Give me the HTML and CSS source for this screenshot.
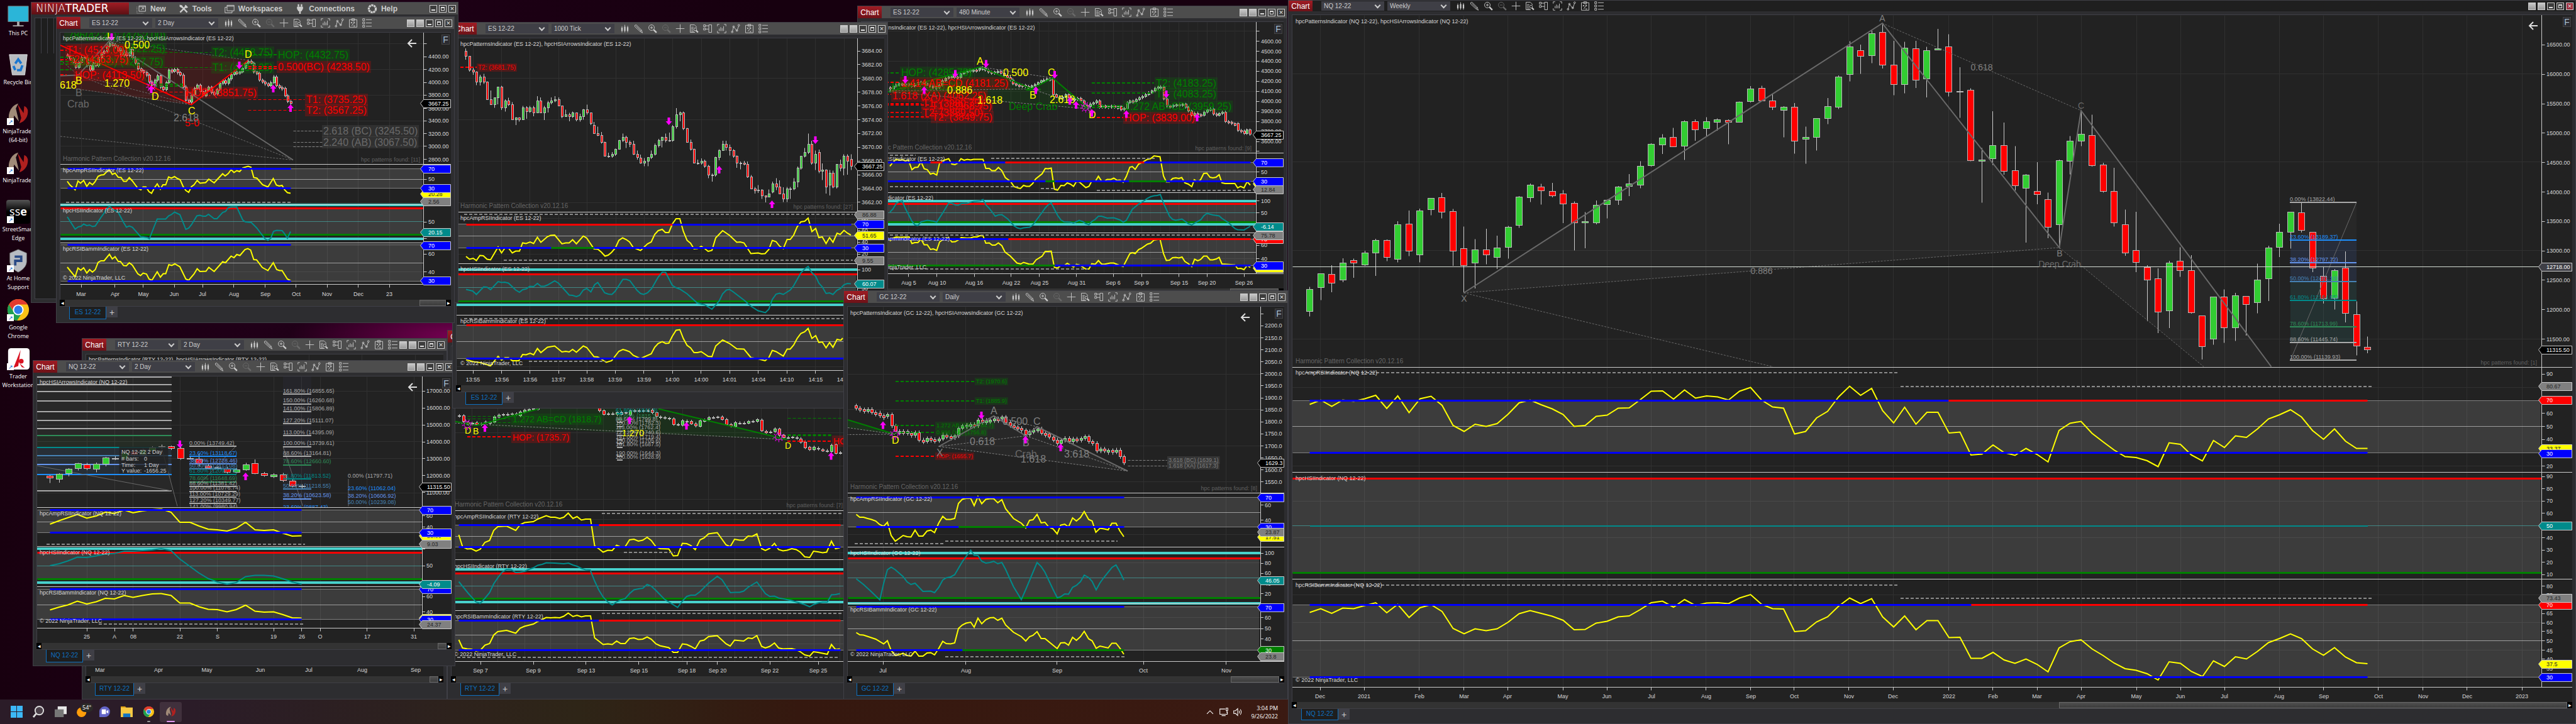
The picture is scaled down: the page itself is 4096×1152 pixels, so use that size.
FILE: index.html
```html
<!DOCTYPE html>
<html lang="en">
<head>
    <meta charset="UTF-8">
    <meta name="viewport" content="width=device-width, initial-scale=1.0">
    <title>NinjaTrader Desktop</title>
    <link rel="stylesheet" href="styles.css">
</head>
<body>
    <svg class="sprite" aria-hidden="true">
        <symbol id="i-bars" viewBox="0 0 20 20"><path d="M4 5v13M10 2v16M16 4v14" class="s"/><path d="M2.500 8h3v7h-3zM8.500 6h3v9h-3zM14.500 7h3v8h-3z" class="f"/></symbol>
        <symbol id="i-pencil" viewBox="0 0 20 20"><path d="M2 3l3-1 11 11-3 3L2 6zM4.500 4.500l10 10M13 16l5 3-2-6" class="s"/></symbol>
        <symbol id="i-zoomin" viewBox="0 0 20 20"><circle cx="8" cy="8" r="6" class="s"/><path d="M5 8h6M8 5v6" class="s"/><path d="M12.500 12.500l6 6" class="t"/></symbol>
        <symbol id="i-zoomout" viewBox="0 0 20 20"><circle cx="8" cy="8" r="6" class="s"/><path d="M5 8h6" class="s"/><path d="M12.500 12.500l6 6" class="t"/></symbol>
        <symbol id="i-cross" viewBox="0 0 20 20"><path d="M1 10h18M10 1v18" class="s"/></symbol>
        <symbol id="i-data" viewBox="0 0 20 20"><path d="M12 18H2V2h9l4 4v2M4 7h5M4 10h4M4 13h4M4 16h6" class="s"/><circle cx="12.500" cy="11.500" r="3" class="s"/><path d="M14.500 14l4 4" class="t"/></symbol>
        <symbol id="i-trader" viewBox="0 0 20 20"><path d="M1 2h4v4H1zM1 9h4v4H1zM5 4h7M5 11h7M12 2h6v16h-6z" class="s"/></symbol>
        <symbol id="i-chart" viewBox="0 0 20 20"><path d="M5 1H1v4M15 1h4v4M5 19H1v-4M15 19h4v-4M5 15v-5M8 15V7M11 15V9M14 15V5" class="s"/></symbol>
        <symbol id="i-poly" viewBox="0 0 20 20"><path d="M3 17L6 6l7 9 4-11" class="s"/><circle cx="3" cy="17" r="1.800" class="s"/><circle cx="6" cy="6" r="1.800" class="s"/><circle cx="13" cy="14" r="1.800" class="s"/><circle cx="17" cy="3" r="1.800" class="s"/></symbol>
        <symbol id="i-strategy" viewBox="0 0 20 20"><path d="M2 3h16v16H2zM7 1h6v4H7zM5 8l3 3M8 8l-3 3M11 15l3 3M14 15l-3 3M7 16l6-8M10 8h3v3" class="s"/></symbol>
        <symbol id="i-list" viewBox="0 0 20 20"><path d="M1 1h4v4H1zM1 8h4v4H1zM1 15h4v4H1zM8 3h12M8 10h12M8 17h12" class="s"/></symbol>
        <symbol id="i-nt" viewBox="0 0 40 40"><path d="M4 27C4 13 12 5 20 3l-4 8 5 22-8-10-2 11c-4-1-7-3-7-7z" fill="#a08a78"/><path d="M36 14c1 11-5 19-14 22l3-9-6-23 10 15 1-12c3 1 5 3 6 7z" fill="#b0201f"/></symbol>
        <symbol id="i-chrome" viewBox="0 0 40 40"><circle cx="20" cy="20" r="18" fill="#fbc116"/><path d="M4.400 11A18 18 0 0 0 18 38l9-14-14 0z" fill="#1fa050"/><path d="M4.400 11A18 18 0 0 1 35.600 11H20l-9 9z" fill="#e33b2e"/><circle cx="20" cy="20" r="9" fill="#fff"/><circle cx="20" cy="20" r="7" fill="#2f7de9"/></symbol>
    </svg>

    <main class="desktop">
        <div class="monitor left">
            <ul class="shortcuts">
                <li><a href="#"><svg viewBox="0 0 40 40"><path d="M3 4h34v26H3z" fill="#2bb5d8" stroke="#777"/><path d="M18 30h4v6h-4zM11 36h18v2H11z" fill="#aaa"/></svg>This PC</a></li>
                <li><a href="#"><svg viewBox="0 0 40 40"><path d="M5 3h30l-4 34H10z" fill="#b9bcc0" stroke="#ddd"/><path d="M15 18l5-7 5 7M27 21l-3 8h-6M12 22l3 7" stroke="#1976d2" stroke-width="4" fill="none"/></svg>Recycle Bin</a></li>
                <li><a href="#" class="link"><svg viewBox="0 0 40 40"><use href="#i-nt"/></svg>NinjaTrader<br>(64-bit)</a></li>
                <li><a href="#" class="link"><svg viewBox="0 0 40 40"><use href="#i-nt"/></svg>NinjaTrader</a></li>
                <li><a href="#" class="link"><span class="tile sse">ss<b>e</b></span>StreetSmart<br>Edge</a></li>
                <li><a href="#" class="link"><svg viewBox="0 0 40 40"><path d="M20 1l14 6v14c0 9-8 15-14 18C14 36 6 30 6 21V7z" fill="#b8bcc2" stroke="#777"/><path d="M14 13h11v7H15v8" stroke="#2a4a86" stroke-width="4" fill="none"/></svg>At Home<br>Support</a></li>
                <li><a href="#" class="link"><svg viewBox="0 0 40 40"><use href="#i-chrome"/></svg>Google<br>Chrome</a></li>
                <li><a href="#" class="link"><svg viewBox="0 0 40 40"><rect x="3" y="2" width="36" height="36" rx="5" fill="#fff"/><path d="M24 5L12 35l8-3z" fill="#d81222"/><circle cx="25" cy="24" r="4" fill="#d81222"/><path d="M22 27l9 8-5-1z" fill="#d81222"/></svg>Trader<br>Workstation</a></li>
            </ul>

            <section class="window w-rty-left" id="rtyLeft"></section>
            <section class="window w-rty-mid" id="rtyMid"></section>
            <section class="window w-nq-left" id="nqLeft"></section>
            <section class="window w-es-480" id="es480"></section>
            <section class="window w-es-tick" id="esTick"></section>

            <section class="window control-center">
                <header class="main-bar">
                    <h1 class="logo">NINJA<b>TRADER</b></h1>
                    <nav>
                        <a href="#"><svg viewBox="0 0 20 20"><path d="M5 4h13v11H5zM5 6h13M9 12l5-4M11 8h3v3" class="s"/><path d="M1 6v13h13" class="s" stroke-dasharray="1 2"/></svg>New</a>
                        <a href="#"><svg viewBox="0 0 20 20"><path d="M3 17L16 4M5 4l12 13" class="w"/><path d="M2 2l5 1 1 3-2 2-4-2zM13 2l-1 4 3 3 4-2" class="f"/></svg>Tools</a>
                        <a href="#"><svg viewBox="0 0 20 20"><path d="M5 3h14v11H5zM5 5h14M5 7H1v11h14v-4" class="s"/></svg>Workspaces</a>
                        <a href="#"><svg viewBox="0 0 20 20"><path d="M7 1v5M13 1v5M10 14v6" class="w"/><path d="M4 6h12v4l-3 5H7l-3-5z" class="f"/></svg>Connections</a>
                        <a href="#"><svg viewBox="0 0 20 20"><circle cx="10" cy="10" r="7" class="ring"/></svg>Help</a>
                    </nav>
                    <div class="controls"><button class="min" aria-label="Minimize"></button><button class="max" aria-label="Maximize"></button><button class="close" aria-label="Close"></button></div>
                </header>
                <div class="main-body"></div>
            </section>

            <section class="window w-es-2day" id="es2day"></section>
            <section class="window w-gc" id="gc"></section>

            <footer class="taskbar">
                <div class="apps">
                    <button aria-label="Start"><svg viewBox="0 0 20 20"><path d="M0 0h9.500v9.500H0zM10.500 0H20v9.500h-9.500zM0 10.500h9.500V20H0zM10.500 10.500H20V20h-9.500z" fill="#3cb8f6"/></svg></button>
                    <button aria-label="Search"><svg viewBox="0 0 20 20"><circle cx="11" cy="8" r="7" fill="#4a3f48" stroke="#ddd" stroke-width="2"/><path d="M6 13l-5 6" stroke="#ddd" stroke-width="3"/></svg></button>
                    <button aria-label="Task view"><svg viewBox="0 0 20 20"><path d="M5 1h15v13H5z" fill="#e8e8e8"/><path d="M0 6h15v13H0z" fill="#777"/></svg></button>
                    <button aria-label="Weather"><svg viewBox="0 0 20 20"><circle cx="8" cy="11" r="8" fill="#ff9d0a"/></svg><span class="temp">54°</span></button>
                    <button aria-label="Chat"><svg viewBox="0 0 20 20"><path d="M1 19V9a9 9 0 1 1 9 10z" fill="#6264c7"/><path d="M5 6h7v8H5zM13 9l3-2v6l-3-2z" fill="#fff"/></svg></button>
                    <button aria-label="Files"><svg viewBox="0 0 20 20"><path d="M0 1h7l2 2h11v16H0z" fill="#f7c843"/><path d="M0 1h7l2 2H0z" fill="#d99a10"/><path d="M4 13h12v6H4z" fill="#1173c5"/></svg></button>
                    <button aria-label="Chrome"><svg viewBox="0 0 40 40"><use href="#i-chrome"/></svg><i class="dot"></i></button>
                    <button class="active" aria-label="NinjaTrader"><svg viewBox="0 0 40 40"><use href="#i-nt"/></svg><i class="dot"></i></button>
                </div>
                <div class="tray">
                    <svg viewBox="0 0 20 20"><path d="M3 14l7-7 7 7"/></svg>
                    <svg viewBox="0 0 20 20"><path d="M13 3H1v12h17V9M5 18h9M15 1h4v5h-4zM17 6v6"/></svg>
                    <svg viewBox="0 0 20 20"><path d="M1 7h4l5-5v16l-5-5H1zM13 7q2 3 0 6M16 4q4 6 0 12"/></svg>
                    <time>3:04 PM<br>9/26/2022</time>
                </div>
            </footer>
        </div>
        <div class="monitor right">
            <section class="window maximized" id="nqWeekly"></section>
        </div>
    </main>

    <template id="chartWindow">
        <header class="title-bar">
            <button class="badge">Chart</button>
            <label class="drop"><select class="instrument" aria-label="Instrument"></select></label>
            <label class="drop"><select class="interval" aria-label="Interval"></select></label>
            <div class="tools"></div>
            <div class="controls"><button class="blank" aria-label="Link instrument"></button><button class="blank" aria-label="Link interval"></button><button class="min" aria-label="Minimize"></button><button class="max" aria-label="Maximize"></button><button class="close" aria-label="Close"></button></div>
        </header>
        <div class="plot"><svg></svg><button class="fixed">F</button></div>
        <div class="scroll"><button aria-label="Scroll left">&#9666;</button><div class="track"><div class="thumb"></div></div><button aria-label="Scroll right">&#9656;</button></div>
        <div class="tabs"><button class="tab"></button><button class="add" aria-label="Add tab">+</button></div>
    </template>

    <script src="charts.js"></script>
</body>
</html>
```
FILE: styles.css
```css
* {
    box-sizing: border-box;
}
body {
    margin: 0;
    background: #17000f;
    color: #ccc;
    font-family: Arial, "Liberation Sans", sans-serif;
    font-size: 10px;
    overflow: hidden;
}
button {
    font-family: inherit;
    color: inherit;
    border: none;
    padding: 0;
    background: none;
}
a {
    color: inherit;
    text-decoration: none;
}
.sprite {
    position: absolute;
    width: 0;
    height: 0;
}
.s {
    fill: none;
    stroke: currentColor;
    stroke-width: 1.2;
}
.t, .w {
    fill: none;
    stroke: currentColor;
    stroke-width: 3;
}
.f {
    fill: currentColor;
}
.ring {
    fill: none;
    stroke: currentColor;
    stroke-width: 4;
    stroke-dasharray: 4 1;
}
.desktop {
    display: grid;
    grid-template-columns: 1fr 1fr;
    height: 100vh;
}
.monitor {
    position: relative;
    overflow: hidden;
}
.left {
    background: radial-gradient(ellipse 280px 60px at 740px 535px, #7a0055, transparent), linear-gradient(90deg, #18000f, #200018 20%, #17000f 60%);
}

/* desktop shortcuts */
.shortcuts {
    list-style: none;
    margin: 0;
    padding: 6px 0;
    width: 58px;
    font-family: "Open Sans", sans-serif;
    font-size: 9px;
    line-height: 14px;
    color: #fff;
    text-align: center;
}
.shortcuts li {
    height: 78px;
}
.shortcuts a {
    display: block;
    position: relative;
    white-space: nowrap;
}
.shortcuts svg, .tile {
    display: block;
    width: 38px;
    height: 38px;
    margin: 0 auto 2px;
}
.tile {
    background: linear-gradient(#555, #000 50%);
    border-radius: 4px;
    font-size: 18px;
    line-height: 36px;
}
.link::before {
    content: "\2197";
    position: absolute;
    left: 11px;
    top: 26px;
    width: 11px;
    height: 11px;
    background: #fff;
    color: #0a6ad0;
    line-height: 11px;
}

/* windows */
.window {
    position: absolute;
    display: flex;
    flex-direction: column;
    background: #2d2d30;
    border: 1px solid #3f3f46;
    overflow: hidden;
}
.w-rty-left { left: 130px; top: 538px; width: 581px; height: 575px; }
.w-rty-mid { left: 711px; top: 525px; width: 689px; height: 588px; }
.w-nq-left { left: 52px; top: 573px; width: 672px; height: 487px; }
.w-es-480 { left: 1363px; top: 9px; width: 684px; height: 487px; }
.w-es-tick { left: 719px; top: 35px; width: 693px; height: 615px; }
.w-es-2day { left: 89px; top: 26px; width: 634px; height: 488px; }
.w-gc { left: 1341px; top: 462px; width: 707px; height: 651px; }
.control-center { left: 49px; top: 3px; width: 680px; height: 479px; }
.maximized {
    inset: 0;
}
.title-bar, .main-bar {
    display: flex;
    align-items: center;
    flex: none;
    height: 19px;
    background: #4d4d4d;
}
.badge {
    align-self: stretch;
    width: 38px;
    margin-right: 14px;
    background: linear-gradient(#a01c24, #6d1218);
    color: #fff;
    font-size: 12px;
}
.drop {
    position: relative;
    margin-right: 5px;
}
.drop select {
    appearance: none;
    display: block;
    width: 100px;
    height: 15px;
    padding: 0 4px;
    border: none;
    background: #3f3f46;
    color: #ccc;
    font-family: inherit;
    font-size: 10px;
}
.drop::after {
    content: "";
    position: absolute;
    right: 7px;
    top: 3px;
    width: 5px;
    height: 5px;
    border: solid #ccc;
    border-width: 0 2px 2px 0;
    transform: rotate(45deg);
}
.tools {
    display: flex;
    flex: 1;
    gap: 7px;
    margin-left: 4px;
}
.tools button {
    width: 15px;
    height: 15px;
}
.tools svg {
    display: block;
    width: 15px;
    height: 15px;
}
.tools .off {
    color: #6a6a6a;
}
.controls {
    display: flex;
    gap: 3px;
    padding-right: 3px;
}
.controls button {
    position: relative;
    width: 12px;
    height: 12px;
    border: 1px solid #ccc;
    background: #3c3c3c;
}
.controls .blank {
    background: linear-gradient(#c8c8c8, #999);
}
.min::after {
    content: "";
    position: absolute;
    left: 2px;
    right: 2px;
    bottom: 2px;
    height: 2px;
    background: #ddd;
}
.max::after {
    content: "";
    position: absolute;
    inset: 2px;
    border: 1px solid #ddd;
    border-top-width: 2px;
}
.close::after {
    content: "\2715";
    position: absolute;
    inset: 0;
    font: bold 9px/10px "DejaVu Sans", sans-serif;
    color: #ddd;
}
.plot {
    position: relative;
    flex: 1;
    min-height: 0;
    margin: 5px 5px 0;
    background: #222;
    border: solid #3f3f46;
    border-width: 1px 0 0 1px;
}
.plot svg {
    position: absolute;
    inset: 0;
    width: 100%;
    height: 100%;
}
.plot svg text {
    white-space: pre;
}
.fixed {
    position: absolute;
    right: 2px;
    top: 3px;
    width: 13px;
    height: 16px;
    background: #2a2a30;
    border: 1px solid #444;
    color: #a9bfd0;
    font-size: 14px;
    line-height: 14px;
}
.plain .fixed {
    display: none;
}
.scroll {
    display: flex;
    flex: none;
    height: 11px;
    margin: 0 5px;
    background: #333;
    border-bottom: 1px solid #3f3f46;
}
.scroll button {
    width: 8px;
    background: #000;
    color: #fff;
    font-size: 9px;
    line-height: 9px;
}
.track {
    flex: 1;
    display: flex;
    justify-content: flex-end;
}
.thumb {
    width: 42px;
    background: linear-gradient(#505050, #3c3c3c);
    border: 1px solid #686868;
}
.w-nq-left .thumb { width: 14px; }
.w-rty-left .thumb { width: 14px; }
.w-gc .thumb, .w-es-480 .thumb { width: 77px; }
.maximized .thumb { width: 40%; }
.tabs {
    display: flex;
    flex: none;
    height: 25px;
    margin: 0 20px;
    padding-bottom: 5px;
}
.tab {
    padding: 0 6px 2px;
    min-width: 59px;
    background: #1e1e1e;
    border: 1px solid #0e70c0;
    border-top: none;
    color: #0e70c0;
    font-size: 10px;
}
.add {
    width: 18px;
    height: 17px;
    background: #3f3f46;
    font-size: 14px;
    line-height: 14px;
}
.maximized .title-bar {
    height: 17px;
    background: #1f1f1f;
}
.maximized .tabs {
    height: 23px;
}
.maximized .controls .close {
    background: #a03040;
}

/* control center */
.logo {
    margin: 0;
    width: 155px;
    height: 100%;
    padding-left: 7px;
    background: linear-gradient(#a01c24, #5d1014);
    color: #fff;
    font: 200 17px/18px "DejaVu Sans", sans-serif;
}
.main-bar nav {
    display: flex;
    flex: 1;
    gap: 20px;
    padding-left: 12px;
    font-size: 12px;
    font-weight: bold;
}
.main-bar a {
    display: flex;
    align-items: center;
    gap: 6px;
}
.main-bar a svg {
    width: 16px;
    height: 16px;
}
.main-body {
    flex: 1;
    margin: 5px;
    background: repeating-linear-gradient(90deg, transparent 0 9px, #3f3f46 9px 10px) 0 0 / 32px 56px no-repeat, #1e1e1e;
    border: 1px solid #3f3f46;
}

/* taskbar */
.taskbar {
    position: absolute;
    left: 0;
    right: 0;
    bottom: 0;
    height: 39px;
    display: flex;
    justify-content: space-between;
    align-items: center;
    background: linear-gradient(90deg, #2b1c28, #2b1c28 15%, #2e2517 45%, #35180f 62%, #3b1a12);
    color: #fff;
    font-family: "Open Sans", sans-serif;
}
.apps {
    display: flex;
    padding-left: 9px;
}
.apps button {
    position: relative;
    width: 35px;
    height: 32px;
}
.apps svg {
    width: 19px;
    height: 19px;
    vertical-align: middle;
}
.apps .active {
    background: #40303c;
    border-radius: 3px;
}
.temp {
    position: absolute;
    left: 14px;
    top: 2px;
    padding: 0 3px;
    border-radius: 8px;
    background: #2c2a28;
    font-size: 9px;
    line-height: 14px;
}
.dot {
    position: absolute;
    left: 15px;
    bottom: 0;
    width: 5px;
    height: 2px;
    border-radius: 1px;
    background: #999;
}
.active .dot {
    left: 11px;
    width: 13px;
    background: #e09af0;
}
.tray {
    display: flex;
    align-items: center;
    gap: 8px;
    padding-right: 16px;
}
.tray svg {
    width: 14px;
    height: 14px;
    fill: none;
    stroke: #fff;
    stroke-width: 1.5;
}
.tray time {
    margin-left: 6px;
    text-align: right;
    font-size: 9px;
    line-height: 13px;
}
```
FILE: charts.js
```js
var NS = 'http://www.w3.org/2000/svg';
var GREEN = '#008000', RED = '#ff0000', BLUE = '#0000ff', YELLOW = '#ffff00';
var TEAL = '#008b8b', AQUA = '#48d1cc', GRAY = '#808080', DIM = '#696969', TXT = '#cccccc';

// Chart surface: every chart has its own units, stretched over the plot area
function Surface(svg, view, axis) {
    this.svg = svg;
    this.view = view;
    this.axis = axis;
    this.kx = svg.clientWidth / (view[2] - view[0]);
    this.ky = svg.clientHeight / (view[3] - view[1]);
    this.remap = null;
    svg.innerHTML = '';
    var id = svg.parentNode.parentNode.id + 'Clip';
    var clip = this.el('clipPath', { id: id }, svg);
    this.el('rect', { x: 0, y: 0, width: this.X(axis), height: svg.clientHeight }, clip);
    this.g = this.el('g', { 'clip-path': 'url(#' + id + ')' }, svg);
}
Surface.prototype = {
    el: function (name, attrs, parent) {
        var e = document.createElementNS(NS, name);
        for (var k in attrs) e.setAttribute(k, attrs[k]);
        (parent || this.g).appendChild(e);
        return e;
    },
    X: function (x) { return Math.round((x - this.view[0]) * this.kx * 2) / 2; },
    Y: function (y) {
        if (this.remap) y = this.remap(y);
        return Math.round((y - this.view[1]) * this.ky * 2) / 2;
    },
    // odd widths sit on half pixels so that straight lines stay sharp
    snap: function (v, w) { return w % 2 ? Math.floor(v) + 0.5 : Math.round(v); },
    line: function (x1, y1, x2, y2, color, w, dash) {
        w = w || 1;
        this.el('line', { x1: this.snap(this.X(x1), w), y1: this.snap(this.Y(y1), w), x2: this.snap(this.X(x2), w), y2: this.snap(this.Y(y2), w), stroke: color, 'stroke-width': w, 'stroke-dasharray': dash || 'none' });
    },
    h: function (y, x1, x2, color, w, dash) { this.line(x1, y, x2, y, color, w, dash); },
    full: function (y, color, w, dash) { this.h(y, this.view[0], this.axis, color, w, dash); },
    dashes: function (y, x1, x2) { this.h(y, x1, x2, '#8a8a8a', 2, '5 3'); },
    grid: function (xs, ys, bottom) {
        var c = this, y0 = this.view[1];
        xs.forEach(function (x) { c.line(x, y0, x, bottom, '#303030'); });
        ys.forEach(function (y) { c.full(y, '#303030'); });
    },
    shape: function (pts, fill, opacity) {
        this.el('polygon', { points: this.points(pts), fill: fill, 'fill-opacity': opacity });
    },
    points: function (pts) {
        var c = this;
        return pts.trim().split(/\s+/).map(function (p) {
            p = p.split(',');
            return c.X(+p[0]) + ',' + c.Y(+p[1]);
        }).join(' ');
    },
    poly: function (pts, color, w, dash) {
        this.el('polyline', { points: this.points(pts), fill: 'none', stroke: color, 'stroke-width': w || 2, 'stroke-dasharray': dash || 'none' });
    },
    series: function (x0, dx, ys, color) {
        this.poly(ys.split(',').map(function (y, i) { return (x0 + i * dx) + ',' + y; }).join(' '), color, 2);
    },
    text: function (x, y, str, size, color, anchor, parent) {
        var t = this.el('text', { x: Math.round(this.X(x)), y: Math.round(this.Y(y) + size * 0.36), fill: color, 'font-size': size, 'text-anchor': anchor || 'start' }, parent);
        t.textContent = str;
        return t;
    },
    title: function (y, str, x) { this.text(x || this.view[0] + 9, y, str, 9, '#d8d8d8'); },
    footer: function (y, n, yn) {
        this.text(this.view[0] + 9, y, 'Harmonic Pattern Collection v20.12.16', 10, '#666');
        this.text(this.axis - 12, yn || y, 'hpc patterns found: [' + n + ']', 9, '#606060', 'end');
    },
    label: function (x, y, str, size, color) {
        var t = this.text(x, y, str, size, color), b = t.getBBox();
        var r = this.el('rect', { x: b.x - 2, y: b.y - 1, width: b.width + 4, height: b.height + 2, fill: color, 'fill-opacity': 0.2 });
        this.g.insertBefore(r, t);
    },
    bar: function (x, w, color, top, bottom, high, low) {
        var left = Math.round(this.X(x) - w / 2) + 0.5, mid = left + Math.floor(w / 2);
        var y = Math.floor(this.Y(top)) + 0.5, hh = Math.max(1, Math.floor(this.Y(bottom)) + 0.5 - y);
        this.el('line', { x1: mid, x2: mid, y1: this.Y(high), y2: this.Y(low), stroke: TXT, 'stroke-width': 1 });
        this.el('rect', { x: left, y: y, width: w, height: hh, fill: color === 'g' ? '#32cd32' : RED, stroke: '#bbb', 'stroke-width': 1 });
    },
    candles: function (x0, dx, w, data) {
        var c = this;
        data.split(',').forEach(function (d, i) {
            var v = d.trim().slice(1).split(' ').map(Number);
            if (v.length < 4) v = [v[0], v[1], v[0] - 6, v[1] + 6];
            c.bar(x0 + i * dx, w, d.trim()[0], v[0], v[1], v[2], v[3]);
        });
    },
    walk: function (x0, dx, w, data) {
        var c = this, v = data.split(','), prev = +v[0] - 8;
        v.forEach(function (d, i) {
            d = +d;
            var top = Math.min(prev, d), bottom = Math.max(prev, d);
            if (bottom - top < 7) bottom = top + 7;
            c.bar(x0 + i * dx, w, d < prev ? 'g' : 'r', top, bottom, top - 7, bottom + 8);
            prev = d;
        });
    },
    arrow: function (x, y, up) {
        var px = this.X(x), py = this.Y(y), s = up ? 1 : -1;
        this.el('path', { d: 'M' + px + ' ' + (py - 6 * s) + 'l5 ' + 6 * s + 'h-3v' + 6 * s + 'h-4v' + -6 * s + 'h-3z', fill: '#ff00ff' });
    },
    sun: function (x, y) {
        this.el('circle', { cx: this.X(x), cy: this.Y(y), r: 5, fill: 'none', stroke: '#ff00ff', 'stroke-width': 1 });
        this.el('circle', { cx: this.X(x), cy: this.Y(y), r: 7, fill: 'none', stroke: '#ff00ff', 'stroke-width': 3, 'stroke-dasharray': '1 4' });
    },
    rsi: function (top, bottom, mid) {
        this.el('rect', { x: 0, y: this.Y(top), width: this.X(this.axis) - 2, height: this.Y(bottom) - this.Y(top), fill: '#fff', 'fill-opacity': 0.12 });
        this.full(top, GRAY);
        this.full(bottom, GRAY);
        this.full(mid, '#fff', 1, '1 1');
    },
    hsi: function (a, red, mid, green, b) {
        this.el('rect', { x: 0, y: this.Y(red), width: this.X(this.axis) - 2, height: this.Y(green) - this.Y(red), fill: '#fff', 'fill-opacity': 0.12 });
        if (a) this.full(a, AQUA, 4);
        this.full(red, RED, 3);
        this.full(mid, AQUA, 1, '1 1');
        this.full(green, GREEN, 3);
        if (b) this.full(b, AQUA, 4);
    },
    level: function (y, parts) {
        for (var i = 0; i < parts.length - 1; i += 2) this.h(y, parts[i], parts[i + 2], parts[i + 1], 3);
    },
    fib: function (x1, x2, rows) {
        var c = this;
        rows.forEach(function (r) {
            c.h(r[0], x1, x2, r[2], 2);
            c.text(x1, r[0] - 13, r[1], 9, r[2]);
        });
    },
    split: function (y) {
        var py = this.snap(this.Y(y), 1);
        this.el('line', { x1: 0, x2: this.svg.clientWidth, y1: py, y2: py, stroke: TXT }, this.svg);
    },
    vaxis: function (bottom) {
        var x = this.snap(this.X(this.axis), 1);
        this.el('line', { x1: x, x2: x, y1: 0, y2: this.Y(bottom), stroke: TXT }, this.svg);
    },
    ticks: function (list) {
        var c = this, x = c.X(c.axis);
        for (var i = 0; i < list.length; i += 2) {
            var py = c.snap(c.Y(list[i]), 1);
            c.el('line', { x1: x, x2: x + 5, y1: py, y2: py, stroke: TXT }, c.svg);
            var t = c.text(c.axis, list[i], list[i + 1], 9, '#d8d8d8', 'start', c.svg);
            t.setAttribute('x', Math.round(x + 7));
        }
    },
    scale: function (y0, dy, v0, dv, n, dec) {
        var list = [];
        for (var i = 0; i < n; i++) list.push(y0 + dy * i, (v0 + dv * i).toFixed(dec));
        this.ticks(list);
    },
    tag: function (y, str, bg, fg) {
        var x = this.snap(this.X(this.axis), 1), r = this.svg.clientWidth - 0.5, py = this.snap(this.Y(y), 1);
        this.el('path', { d: 'M' + (x - 5) + ' ' + py + 'L' + x + ' ' + (py - 6) + 'H' + r + 'V' + (py + 7) + 'H' + x + 'z', fill: bg, stroke: TXT }, this.svg);
        var t = this.text(this.axis, y, str, 9, fg || '#fff', 'start', this.svg);
        t.setAttribute('x', Math.round(x + 7));
        t.setAttribute('y', Math.round(py + 3));
    },
    dates: function (y, ty, list) {
        for (var i = 0; i < list.length; i += 2) {
            this.line(list[i], y, list[i], y + (ty - y) / 3, TXT);
            this.text(list[i], ty, list[i + 1], 9, '#d8d8d8', 'middle');
        }
    },
    back: function () {
        var x = this.svg.clientWidth - 62;
        this.el('path', { d: 'M' + (x + 7) + ' 17H' + (x - 6) + 'M' + x + ' 11l-6 6 6 6', fill: 'none', stroke: '#ddd', 'stroke-width': 2 }, this.svg);
    }
};

function every(from, step, n) {
    var a = [];
    for (var i = 0; i < n; i++) a.push(from + step * i);
    return a;
}

var charts = {
    es2day: {
        name: 'ES 12-22', interval: '2 Day', view: [206, 150, 1559, 1375], axis: 1464,
        draw: function (c) {
            c.grid([278, 395, 492, 600, 698, 806, 915, 1022, 1130, 1238, 1346], [200, 318, 436, 553, 670, 930, 1247], 1305);
            c.shape('206,210 376,188 470,215 852,276 660,480 206,400', RED, 0.13);
            c.walk(230, 9.785, 3, '260,270,285,308,285,262,262,300,320,285,300,262,240,235,210,200,205,215,230,255,240,255,225,265,290,315,325,332,345,375,390,368,346,400,410,378,322,322,319,333,343,398,460,468,436,405,390,420,438,412,400,425,430,410,382,370,382,362,340,330,335,328,312,290,280,290,330,335,367,376,385,392,378,352,392,401,405,438,465,474');
            c.poly('206,348 268,344 376,188', DIM, 2);
            c.poly('206,275 268,344 1012,733', DIM, 1, '3 2');
            c.poly('268,344 660,480', DIM, 1, '3 2');
            c.poly('376,188 1012,733', DIM, 2);
            c.poly('376,188 852,276', DIM, 1, '3 2');
            c.poly('206,398 660,480', DIM, 1, '3 2');
            c.poly('206,625 1012,733', DIM, 1, '3 2');
            c.poly('206,208 660,480 855,278', RED, 2);
            c.poly('396,210 522,395', GREEN, 1);
            c.label(222, 163, '.786(42.25): (4752.00)', 16, GREEN);
            c.label(370, 224, '     (4522.25)', 16, GREEN);
            c.label(245, 284, '0.886(AD) (4227.75)', 16, GREEN);
            c.label(228, 228, 'T1: (4513.00)', 16, RED);
            c.label(232, 273, 'T2: (4363.75)', 16, RED);
            c.label(256, 345, 'HOP: (4113.50)', 16, RED);
            [229, 272, 342].forEach(function (y) { c.h(y, 206, 228, RED, 2, '5 3'); });
            [262, 282, 292, 320].forEach(function (y) { c.h(y, 206, 244, GREEN, 2, '5 3'); });
            c.label(732, 241, 'T2: (4458.75)', 16, GREEN);
            c.label(732, 309, 'T1: (4233.25)', 16, GREEN);
            c.h(241, 532, 730, GREEN, 1, '5 3');
            c.h(309, 532, 730, GREEN, 1, '5 3');
            c.label(960, 251, 'HOP: (4432.75)', 16, GREEN);
            c.label(960, 306, '0.500(BC) (4238.50)', 16, RED);
            c.h(251, 856, 956, GREEN, 2, '5 3');
            c.h(306, 856, 956, RED, 2, '5 3');
            c.h(315, 856, 956, RED, 2, '5 3');
            c.h(387, 532, 632, GREEN, 2, '5 3');
            c.h(394, 532, 632, GREEN, 2, '5 3');
            c.h(422, 532, 632, RED, 1, '5 3');
            c.label(642, 424, 'HOP: (3851.75)', 16, RED);
            c.label(1058, 456, 'T1: (3735.25)', 16, RED);
            c.label(1058, 506, 'T2: (3567.25)', 16, RED);
            c.h(456, 856, 1052, RED, 1, '5 3');
            c.h(505, 856, 1052, RED, 1, '5 3');
            c.label(1116, 600, '2.618 (BC) (3245.50)', 16, DIM);
            c.label(1116, 653, '2.240 (AB) (3067.50)', 16, DIM);
            [599, 652, 671].forEach(function (y) { c.h(y, 1012, 1112, GRAY, 1, '4 2'); });
            c.text(427, 206, '0.500', 16, YELLOW);
            c.text(359, 381, '1.270', 16, YELLOW);
            c.text(204, 390, '618', 16, YELLOW);
            c.text(366, 160, 'L', 16, YELLOW);
            c.text(257, 370, 'B', 16, YELLOW);
            c.text(257, 424, 'B', 16, DIM);
            c.text(230, 476, 'Crab', 16, DIM);
            c.text(843, 250, 'D', 16, YELLOW);
            c.text(522, 442, 'D', 16, YELLOW);
            c.text(648, 507, 'C', 16, YELLOW);
            c.text(636, 562, '5-0', 16, RED);
            c.text(597, 539, '2.618', 16, GRAY);
            c.sun(521, 396);
            c.arrow(521, 410, true);
            c.arrow(384, 170);
            c.arrow(826, 300);
            c.arrow(944, 406, true);
            c.arrow(1003, 496, true);
            c.title(175, 'hpcPatternsIndicator (ES 12-22), hpcHSIArrowsIndicator (ES 12-22)');
            c.footer(726, 11, 731);
            c.rsi(774, 864, 821);
            c.poly('230,832 239,848 257,870 267,830 276,841 287,828 298,855 307,838 317,848 326,835 337,808 346,803 356,802 366,788 376,779 386,800 396,794 406,813 416,815 425,831 435,832 445,815 456,830 465,847 475,865 485,870 493,857 502,857 513,879 522,886 532,862 542,843 552,867 561,848 571,848 581,812 591,817 601,810 611,818 621,824 631,855 641,873 650,882 660,856 669,848 680,828 690,841 709,838 720,822 739,839 749,824 768,797 777,807 788,796 797,778 807,791 817,783 827,787 838,770 856,763 866,767 876,815 887,817 906,848 925,858 944,818 954,849 964,853 974,851 983,870 993,883 1003,887', YELLOW);
            c.level(774, [230, BLUE, 1004]);
            c.level(864, [230, BLUE, 1004]);
            c.dashes(927, 225, 1008);
            c.title(780, 'hpcAmpRSIIndicator (ES 12-22)');
            c.hsi(940, 955, 1016, 1077, 1094);
            c.poly('230,994 257,1051 268,1040 278,1038 287,1027 298,1035 307,1032 317,1039 327,1036 346,997 357,977 366,959 376,947 386,959 406,975 425,1020 435,1042 445,1037 455,1042 484,1085 493,1087 508,1090 514,1096 532,1036 542,1004 571,1004 581,990 591,985 601,973 620,985 641,1052 650,1046 660,1030 679,990 689,988 699,991 709,991 719,983 739,1003 749,1003 768,975 778,970 788,953 797,950 817,950 838,1009 847,1018 867,1020 886,1045 915,1095 925,1103 935,1093 945,1061 955,1056 974,1058 983,1072 993,1092 1003,1062', TEAL);
            c.title(965, 'hpcHSIIndicator (ES 12-22)');
            c.rsi(1123, 1288, 1206);
            c.poly('230,1225 257,1270 267,1230 277,1240 287,1228 298,1253 307,1237 317,1248 327,1236 337,1203 347,1197 357,1197 376,1166 386,1188 396,1178 406,1199 414,1199 425,1218 435,1220 445,1205 456,1217 474,1255 484,1264 492,1252 504,1257 513,1280 523,1286 542,1247 552,1271 562,1256 571,1255 582,1214 592,1218 602,1210 620,1223 641,1280 650,1285 669,1257 680,1233 690,1245 710,1244 720,1226 739,1245 768,1200 778,1205 798,1174 807,1182 817,1168 828,1172 846,1145 855,1140 865,1148 876,1190 886,1192 905,1226 925,1241 944,1205 955,1237 965,1241 974,1241 993,1280 1003,1287', YELLOW);
            c.level(1123, [230, BLUE, 1004]);
            c.level(1288, [230, BLUE, 1004]);
            c.title(1140, 'hpcRSIBammIndicator (ES 12-22)');
            c.title(1273, '© 2022 NinjaTrader, LLC');
            [753, 937, 1113, 1305].forEach(c.split, c);
            c.dates(1305, 1347, [278, 'Mar', 395, 'Apr', 492, 'May', 600, 'Jun', 698, 'Jul', 806, 'Aug', 915, 'Sep', 1022, 'Oct', 1130, 'Nov', 1238, 'Dec', 1346, '23']);
            c.vaxis(1305);
            c.ticks([200, '', 260, '4400.00', 318, '4200.00', 378, '4000.00', 436, '3800.00', 497, '3600.00', 553, '3400.00', 613, '3200.00', 670, '3000.00', 731, '2800.00', 821, '50', 1017, '50', 1094, '', 1164, '60', 1247, '40']);
            c.tag(474, '3667.25', '#000');
            c.tag(774, '70', BLUE);
            c.tag(889, '20.28', YELLOW, '#222');
            c.tag(864, '30', BLUE);
            c.tag(922, '2.56', GRAY, '#222');
            c.tag(1063, '20.15', TEAL);
            c.tag(1126, '70', BLUE);
            c.tag(1287, '30', BLUE);
            c.back();
        }
    },
    nqLeft: {
        name: 'NQ 12-22', interval: '2 Day', view: [127, 180, 1560, 1247], axis: 1458,
        draw: function (c) {
            c.grid([299, 395, 459, 621, 750, 945, 1041, 1105, 1268, 1430], [238, 374, 441, 508, 645, 827, 1123], 1187);
            c.shape('127,180 591,180 591,638 127,638', '#fff', 0.03);
            c.shape('127,415 591,415 591,464 127,464', GREEN, 0.05);
            c.shape('127,464 591,464 591,573 127,573', '#1e90ff', 0.07);
            c.shape('977,180 1075,180 1075,700 977,700', '#88f', 0.04);
            [181, 212, 239, 277, 320, 356, 388].forEach(function (y) { c.h(y, 127, 591, '#a9a9a9', 2); });
            c.h(415, 127, 591, '#2e8b57', 2);
            c.h(464, 127, 591, TEAL, 2);
            c.h(497, 127, 591, '#4682b4', 2);
            c.h(531, 127, 591, '#6495ed', 2);
            c.h(573, 127, 591, '#1e90ff', 2);
            c.h(638, 127, 591, '#a9a9a9', 2);
            c.poly('127,537 591,638', DIM, 1);
            c.poly('557,461 612,700', DIM, 1);
            c.poly('655,650 815,458', DIM, 1);
            c.poly('977,460 1046,700', DIM, 1);
            c.poly('1203,590 1203,700', DIM, 1);
            c.candles(170, 32.26, 10, 'r577 586 575 606,g570 590 568 605,g551 569 548 580,g528 548 526 556,r533 548 526 555,g530 550 525 564,g506 530 502 540,r507 508 500 515,g485 510,r480 492,g476 492,g465 478,g459 461 453 470,r459 467 457 475,r467 508 452 513,r507 508,r510 527 490 540,r538 546,r546 547,r549 563,g554 562,g532 552,r528 569 512 571,r568 576,g574 580,r572 597,r598 618,r618 622');
            c.shape('411,461 580,461 580,570 411,570', '#222', 0.8);
            c.text(417, 481, 'NQ 12-22 2 Day', 9, TXT);
            c.text(417, 508, '# bars:', 9, TXT);
            c.text(497, 508, '0', 9, TXT);
            c.text(417, 534, 'Time:', 9, TXT);
            c.text(497, 534, '1 Day', 9, TXT);
            c.text(417, 558, 'Y value:', 9, TXT);
            c.text(497, 558, '-1656.25', 9, TXT);
            var a = '#a9a9a9';
            c.fib(653, 815, [[458, '0.00% (13749.42)', a], [500, '23.60% (13118.67)', '#1e90ff'], [529, '38.20% (12728.46)', '#6495ed'], [549, '50.00% (12413.08)', '#4682b4'], [571, '61.80% (12097.70)', TEAL], [601, '78.60% (11648.69)', '#2e8b57'], [619, '88.60% (11381.42)', a], [639, '100.00% (11076.74)', a], [663, '113.00% (10729.29)', a], [688, '127.20% (10349.77)', a], [713, '141.00% (9980.94)', a]]);
            c.fib(976, 1075, [[249, '161.80% (16855.65)', a], [289, '150.00% (16260.68)', a], [320, '141.00% (15806.89)', a], [368, '127.20% (15111.07)', a], [416, '113.00% (14395.09)', a], [460, '100.00% (13739.61)', a], [499, '88.60% (13164.81)', a], [533, '78.60% (12660.60)', '#2e8b57'], [589, '61.80% (11813.52)', TEAL], [629, '50.00% (11218.55)', '#4682b4'], [669, '38.20% (10623.58)', '#6495ed'], [716, '23.60% (9887.43)', '#1e90ff']]);
            c.text(1201, 577, '0.00% (11797.71)', 9, a);
            c.text(1201, 628, '23.60% (11062.04)', 9, '#1e90ff');
            c.text(1201, 658, '38.20% (10606.92)', 9, '#6495ed');
            c.text(1201, 682, '50.00% (10239.08)', 9, '#4682b4');
            c.arrow(621, 452);
            c.arrow(848, 580, true);
            c.title(201, 'hpcHSIArrowsIndicator (NQ 12-22)');
            c.shape('127,703 1458,703 1458,1247 127,1247', '#222', 1);
            [299, 395, 459, 621, 750, 945, 1041, 1105, 1268, 1430].forEach(function (x) { c.line(x, 703, x, 1187, '#303030'); });
            c.rsi(715, 805, 761);
            c.poly('172,771 203,758 266,733 299,748 331,739 363,724 395,728 428,715 459,726 491,719 525,713 557,711 590,724 621,764 655,764 687,779 719,791 750,794 784,799 815,788 848,764 881,794 912,796 945,794 977,808 1009,819 1041,818', YELLOW);
            c.level(715, [172, BLUE, 1041]);
            c.level(805, [172, BLUE, 1041]);
            c.dashes(852, 160, 1052);
            c.title(727, 'hpcAmpRSIIndicator (NQ 12-22)');
            c.hsi(869, 884, 938, 991, 1006);
            c.poly('172,937 203,930 234,919 266,903 299,905 331,899 363,891 395,889 428,880 459,880 525,875 557,870 590,877 621,911 686,967 719,989 750,1003 784,1012 815,1006 848,981 881,977 912,977 945,979 977,990 1009,1003 1041,1012', TEAL);
            c.title(885, 'hpcHSIIndicator (NQ 12-22)');
            c.rsi(1030, 1153, 1093);
            c.poly('172,1115 203,1104 234,1095 266,1080 299,1091 331,1082 363,1068 395,1071 428,1057 459,1065 491,1057 525,1051 557,1049 590,1057 621,1087 655,1087 687,1102 719,1112 750,1114 784,1122 815,1113 848,1096 881,1120 912,1124 945,1122 977,1134 1009,1146 1041,1148', YELLOW);
            c.level(1031, [172, BLUE, 1041]);
            c.level(1153, [172, BLUE, 1041]);
            c.dashes(1171, 340, 1052);
            c.title(1046, 'hpcRSIBammIndicator (NQ 12-22)');
            c.title(1158, '© 2022 NinjaTrader, LLC');
            [703, 860, 1022, 1187].forEach(c.split, c);
            c.dates(1187, 1222, [299, '25', 395, 'A', 459, '08', 621, '22', 750, 'S', 945, '19', 1041, '26', 1105, 'O', 1268, '17', 1430, '31']);
            c.vaxis(1187);
            c.scale(238, 67.7, 17000, -1000, 7, 2);
            c.ticks([738, '60', 783, '40', 869, '', 938, '50', 1061, '60', 1123, '40']);
            c.tag(622, '11315.50', '#000');
            c.tag(715, '70', BLUE);
            c.tag(818, '23.86', YELLOW, '#222');
            c.tag(805, '30', BLUE);
            c.tag(850, '9.03', GRAY, '#222');
            c.tag(1031, '70', BLUE);
            c.tag(1010, '-4.09', TEAL);
            c.tag(1146, '31.2', YELLOW, '#222');
            c.tag(1153, '30', BLUE);
            c.tag(1171, '24.37', GRAY, '#222');
            c.back();
        }
    },
    rtyLeft: {
        name: 'RTY 12-22', interval: '2 Day', view: [295, 92, 1547, 1380], axis: 1547, plain: true,
        draw: function (c) {
            c.grid([343, 549, 718, 905, 1075, 1262, 1449], [], 1320);
            c.title(111, 'hpcPatternsIndicator (RTY 12-22), hpcHSIArrowsIndicator (RTY 12-22)');
            c.dates(1320, 1355, [343, 'Mar', 549, 'Apr', 718, 'May', 905, 'Jun', 1075, 'Jul', 1262, 'Aug', 1449, 'Sep']);
        }
    },
    rtyMid: {
        name: 'RTY 12-22', interval: '480 Minute', view: [12, -68, 1632, 1363], axis: 1560, plain: true,
        draw: function (c) {
            c.grid([89, 188, 290, 389, 489, 590, 689, 790, 891, 991, 1091, 1192, 1292, 1392, 1491], [307, 451, 594, 683, 827, 1222], 1299);
            c.shape('12,262 105,275 340,203 800,203 1292,337 120,280', GREEN, 0.15);
            c.poly('12,265 1292,337', GRAY, 1, '3 2');
            c.candles(40, 16.7, 4, 'r232 235,r232 256,r262 270,r266 269,r262 270,r269 271,g260 262,g262 266,g238 260,g229 238,g228 230,g226 228,g225 228,g224 227,g216 232,g209 216,g206 210,g203 206,g200 204,r190 195,r190 195,r190 195,r190 195,r190 195,r190 195,r190 195,r190 195,r190 195,r190 195,r190 195,r190 195,r190 195,r200 212,r212 226,r224 226,r223 225,g220 228,g218 226,r220 222,g212 230,g211 213,r212 214,r212 214,r210 212,r208 220,r220 234,r238 242,r241 243,r244 246,r246 271,r270 272,g254 273,g256 260,r257 267,r267 277,g255 278,g252 256,g241 250,g240 241,r239 240,r238 248,r249 270,r270 277,g262 280,g264 265,r264 265,g258 264,g257 259,g250 257,r251 297,r300 306,g303 305,g290 302,r291 318,r318 328,r327 328,r326 327,r327 331,r332 348,r346 371,r370 380,g369 380,r373 378,r380 384,r384 386,g360 387,r359 395,r393 395');
            c.poly('12,255 105,275 345,203', GREEN, 2);
            c.poly('800,203 1292,337', GREEN, 2);
            [235, 246, 263].forEach(function (y) { c.h(y, 72, 236, GREEN, 1, '5 3'); });
            c.h(324, 72, 236, RED, 2, '5 3');
            c.label(245, 248, '1.272 AB=CD (1818.7)', 14, GREEN);
            c.label(245, 326, 'HOP: (1735.7)', 14, RED);
            c.h(243, 1292, 1502, GREEN, 1, '5 3');
            c.h(317, 1292, 1457, GREEN, 3, '5 3');
            c.h(344, 1292, 1457, RED, 2, '5 3');
            c.label(1466, 344, 'HOP: (1635.2)', 14, RED);
            var a = '#a9a9a9';
            [[210, '61.80% (1841.0)', TEAL], [233, '78.60% (1815.2)', '#2e8b57'], [248, '88.60% (1799.8)', a], [265, '100.00% (1782.3)', a], [284, '113.00% (1762.4)', a], [305, '127.20% (1740.6)', a], [324, '141.00% (1719.4)', a], [340, '150.00% (1705.6)', a], [356, '161.80% (1687.5)', a], [395, '190.00% (1644.3)', a], [410, '200.00% (1628.9)', a]].forEach(function (r) {
                c.text(638, r[0], r[1], 9, r[2]);
                c.h(r[0] + 14, 641, 664, r[2], 2);
            });
            c.text(661, 307, '1.270', 14, YELLOW);
            c.text(61, 297, 'D', 14, YELLOW);
            c.text(94, 300, 'B', 14, YELLOW);
            c.text(1281, 361, 'D', 14, YELLOW);
            c.sun(72, 272);
            c.sun(1258, 325);
            c.arrow(139, 287, true);
            c.arrow(690, 252, true);
            c.arrow(907, 277, true);
            c.arrow(1458, 407, true);
            c.text(24, 618, 'Harmonic Pattern Collection v20.12.16', 10, '#666');
            c.text(1501, 622, 'hpc patterns found: [7]', 9, '#606060', 'end');
            c.rsi(707, 803, 755);
            c.poly('40,750 54,802 72,811 88,810 105,821 121,813 139,783 157,774 172,731 188,714 222,712 256,731 273,706 290,697 323,692 340,682 373,666 390,674 406,674 424,679 440,673 457,656 474,679 490,671 507,685 523,681 542,681 557,797 573,810 590,825 607,816 624,818 641,795 657,803 674,801 690,771 707,769 724,777 740,773 757,760 773,774 791,801 807,809 840,811 857,841 874,839 891,787 908,788 924,796 941,814 958,771 974,763 991,745 1007,743 1025,740 1058,793 1074,802 1091,769 1109,773 1125,773 1142,755 1158,757 1175,745 1193,810 1208,818 1225,808 1242,786 1258,814 1275,819 1291,817 1309,810 1325,814 1341,824 1358,845 1377,848 1391,820 1408,823 1426,827 1442,825 1459,777 1475,809 1492,805', YELLOW);
            c.level(707, [40, BLUE, 573, RED, 1493]);
            c.level(803, [40, BLUE, 1493]);
            c.dashes(655, 583, 1502);
            c.dashes(825, 667, 862);
            c.title(669, 'hpcAmpRSIIndicator (RTY 12-22)', 22);
            c.hsi(900, 916, 970, 1025, 1042);
            c.poly('40,953 75,1003 105,1041 121,1047 139,1025 157,1000 173,963 190,932 205,912 222,900 240,901 256,913 273,912 290,908 307,899 323,893 340,882 357,878 373,871 406,873 440,875 458,873 474,881 490,886 507,896 523,901 541,902 557,950 573,988 590,1019 607,1042 624,1053 641,1040 657,1032 674,1027 690,1005 707,988 724,984 740,981 757,965 773,972 791,991 823,1029 874,1065 891,1037 908,1017 924,1011 941,1012 958,996 991,960 1025,930 1042,945 1075,1001 1092,999 1109,999 1125,994 1142,977 1175,954 1208,1004 1225,1017 1242,1015 1258,1023 1309,1034 1358,1052 1377,1062 1391,1052 1408,1046 1426,1041 1444,1041 1459,1010 1475,1008 1492,1004', TEAL);
            c.title(885, 'hpcHSIIndicator (RTY 12-22)', 22);
            c.rsi(1121, 1249, 1184);
            c.poly('40,1205 54,1240 72,1245 88,1246 105,1254 123,1249 139,1228 157,1221 172,1185 188,1169 222,1164 256,1176 273,1154 290,1146 323,1137 340,1126 373,1108 390,1110 406,1108 424,1110 440,1103 457,1089 474,1104 490,1098 507,1105 523,1102 542,1101 557,1197 573,1210 590,1225 607,1223 624,1225 641,1211 657,1221 674,1221 690,1199 707,1197 724,1203 740,1202 757,1193 773,1202 791,1223 807,1231 840,1239 857,1260 874,1260 891,1223 908,1225 924,1233 941,1245 958,1211 974,1206 991,1191 1025,1187 1058,1223 1074,1232 1091,1206 1125,1210 1142,1197 1158,1199 1175,1187 1193,1234 1208,1241 1225,1234 1242,1219 1258,1241 1275,1245 1309,1243 1325,1249 1341,1257 1358,1270 1377,1276 1391,1257 1408,1260 1444,1268 1459,1225 1475,1247 1492,1245', YELLOW);
            c.level(1121, [40, BLUE, 573, RED, 1493]);
            c.level(1249, [40, BLUE, 1493]);
            c.dashes(1089, 583, 1502);
            c.dashes(1280, 32, 1485);
            c.title(1103, 'hpcRSIBammIndicator (RTY 12-22)', 22);
            c.title(1268, '© 2022 NinjaTrader, LLC', 22);
            [643, 858, 1077, 1299].forEach(c.split, c);
            c.dates(1299, 1337, [122, 'Sep 7', 323, 'Sep 9', 524, 'Sep 13', 725, 'Sep 15', 908, 'Sep 18', 1024, 'Sep 20', 1225, 'Sep 22', 1409, 'Sep 25']);
        }
    },
    esTick: {
        name: 'ES 12-22', interval: '1000 Tick', view: [29, 163, 1660, 1670], axis: 1557, plain: true,
        draw: function (c) {
            c.grid(every(91, 108.85, 14), [336, 517, 696, 875, 945, 1099, 1588], 1606);
            c.candles(64, 13.6, 3, 'r217 241 206 256,r241 299 240 308,r299 308 289 321,r308 352 306 367,g330 352 322 368,r330 352 317 361,r352 428 350 430,r428 450 390 452,g419 450 419 465,g374 419 373 450,r374 465 369 474,g434 465 428 481,r434 450 421 457,r450 517 440 518,g508 517 506 540,r508 517 505 525,g465 517 457 518,r465 481 458 512,g465 481 457 487,r465 487 456 502,g434 487 414 488,r434 487 420 488,g465 487 457 518,g441 465 435 485,g434 441 420 450,g428 434 414 440,r428 457 420 458,r457 502 455 510,g493 502 473 504,r493 502 486 524,g487 502,r487 517 486 524,g502 517 490 525,g471 502 470 516,r471 487 451 495,r487 532 486 540,r540 576 526 577,r576 585 547 587,r585 613 570 620,r613 674 612 675,r674 675 660 682,g665 674 657 682,g644 665 642 674,g606 644 604 645,g591 606 577 613,r591 613 586 640,r613 622 606 635,r622 665 608 670,r665 681 650 690,r683 705 668 708,g696 705 683 718,g681 696 680 718,g665 681 651 687,g628 665 620 672,g606 628 600 636,g591 606 590 636,r591 606 577 615,r606 607 572 612,g545 606 540 612,g493 545 466 555,g487 493 481 524,r487 554 481 562,r554 613 552 614,r613 644 602 650,r644 705 642 706,r705 706 690 712,g696 705 684 712,r696 717 690 725,r717 757 713 770,r757 758 750 786,g681 757 678 764,g650 681 645 692,g622 650 608 652,r622 637 608 650,r637 650 624 672,r650 674 645 682,r674 705 672 726,r704 705 698 732,r704 711 696 715,r711 763 698 769,r763 815 757 818,r815 823 808 838,r822 823 801 834,r822 846 818 860,r846 852 845 875,g837 852 820 854,g794 831 786 836,r794 808 771 822,r808 837 780 838,r837 861 810 874,g815 861 808 874,r815 816 808 861,g785 815 770 822,g726 785 720 810,g674 726 673 733,g659 674 640 680,g622 659 577 666,r622 705 608 712,g665 705 650 735,r659 741 646 748,g733 741 706 778,r733 808 732 838,g748 800 735 846,r748 808 738 814,g711 808 710 816,r711 726 690 740,g674 726 667 758,r674 696 667 756,r689 717 667 735');
            c.h(289, 42, 105, RED, 2, '5 3');
            c.label(110, 289, 'T2: (3681.75)', 10, RED);
            c.arrow(838, 523);
            c.arrow(1030, 733, true);
            c.arrow(1232, 884, true);
            c.arrow(1397, 605);
            c.title(188, 'hpcPatternsIndicator (ES 12-22), hpcHSIArrowsIndicator (ES 12-22)', 42);
            c.text(42, 890, 'Harmonic Pattern Collection v20.12.16', 10, '#666');
            c.text(1539, 895, 'hpc patterns found: [27]', 9, '#606060', 'end');
            c.rsi(970, 1073, 1022);
            c.poly('65,1110 78,1123 92,1119 105,1128 118,1106 131,1108 145,1123 159,1126 187,1069 201,1096 214,1073 227,1074 241,1096 254,1087 269,1087 281,1051 294,1055 310,1047 323,1055 337,1027 350,1049 375,1024 388,1019 403,1017 431,1056 445,1051 458,1051 471,1038 486,1056 512,1021 525,1031 553,1077 568,1079 581,1091 595,1109 607,1105 620,1093 635,1073 648,1041 662,1030 676,1037 689,1047 703,1072 730,1085 757,1056 771,1047 785,1015 798,999 813,993 825,1006 838,1006 852,970 866,947 880,947 894,1001 908,1041 921,1053 935,1078 948,1076 962,1067 975,1076 988,1089 1003,1085 1017,1030 1044,999 1070,1019 1097,1049 1111,1047 1125,1052 1152,1098 1179,1095 1192,1099 1206,1098 1220,1080 1233,1041 1248,1046 1261,1065 1275,1076 1289,1037 1301,1037 1315,1018 1328,982 1342,960 1357,957 1370,944 1384,1003 1398,989 1411,1028 1424,1026 1438,1054 1451,1028 1465,1049 1480,1010 1492,1015 1507,997 1520,1009 1533,1018', YELLOW);
            c.level(971, [65, RED, 852, BLUE, 1534]);
            c.level(1073, [65, BLUE, 390, GREEN, 553, BLUE, 1534]);
            c.dashes(927, 58, 1540);
            c.dashes(1127, 208, 1540);
            c.title(942, 'hpcAmpRSIIndicator (ES 12-22)', 42);
            c.hsi(1168, 1187, 1245, 1305, 1320);
            c.poly('65,1254 90,1260 105,1276 132,1243 145,1244 159,1255 187,1219 201,1224 213,1222 227,1226 255,1257 269,1266 281,1255 295,1251 309,1240 323,1242 337,1228 350,1240 363,1240 376,1235 403,1217 418,1226 458,1278 471,1279 486,1285 498,1279 512,1256 526,1249 541,1264 555,1233 568,1223 594,1269 608,1274 621,1276 634,1262 663,1210 677,1210 690,1216 717,1258 731,1272 743,1276 757,1269 772,1251 798,1200 813,1178 826,1180 852,1236 865,1246 880,1252 908,1273 947,1313 975,1320 1003,1340 1030,1304 1044,1273 1058,1257 1070,1254 1084,1264 1125,1300 1153,1328 1179,1346 1207,1354 1220,1339 1233,1297 1248,1274 1261,1270 1275,1275 1288,1266 1301,1256 1315,1237 1342,1181 1357,1165 1370,1154 1384,1181 1398,1197 1411,1226 1424,1243 1438,1271 1451,1269 1465,1276 1479,1258 1493,1249 1507,1233 1520,1228 1533,1229', TEAL);
            c.title(1165, 'hpcHSIIndicator (ES 12-22)', 42);
            c.rsi(1409, 1553, 1480);
            c.poly('65,1560 92,1568 120,1572 158,1586 187,1545 201,1561 214,1550 227,1550 241,1564 267,1563 281,1536 294,1538 310,1531 323,1537 337,1510 350,1528 376,1505 403,1500 431,1525 445,1522 458,1525 471,1515 486,1527 512,1500 526,1506 553,1546 568,1547 600,1570 620,1563 648,1523 663,1514 676,1519 689,1524 703,1540 730,1554 771,1533 785,1505 798,1488 813,1480 826,1488 838,1487 852,1457 866,1431 880,1428 894,1466 908,1496 921,1507 935,1528 948,1528 962,1524 988,1545 1003,1546 1017,1500 1044,1474 1070,1488 1098,1511 1125,1513 1152,1550 1165,1553 1179,1556 1206,1563 1220,1550 1233,1518 1248,1524 1275,1543 1289,1513 1301,1513 1315,1495 1328,1467 1342,1445 1357,1438 1370,1423 1384,1467 1398,1455 1411,1485 1424,1482 1438,1508 1451,1484 1465,1505 1480,1471 1495,1475 1502,1465', YELLOW);
            c.level(1409, [65, RED, 1534]);
            c.level(1553, [65, BLUE, 1534]);
            c.dashes(1381, 58, 1540);
            c.dashes(1566, 305, 600);
            c.title(1392, 'hpcRSIBammIndicator (ES 12-22)', 42);
            c.title(1575, '© 2022 NinjaTrader, LLC', 42);
            [916, 1140, 1366, 1606].forEach(c.split, c);
            c.dates(1606, 1645, [91, '13:55', 200, '13:56', 309, '13:56', 418, '13:57', 525, '13:58', 634, '13:59', 743, '13:59', 852, '14:00', 961, '14:00', 1070, '14:01', 1179, '14:04', 1288, '14:10', 1397, '14:15', 1506, '14:20']);
            c.vaxis(1606);
            c.scale(217, 59.8, 3684, -2, 12, 2);
            c.ticks([948, '80', 997, '60', 1048, '40', 1099, '20', 1168, '100', 1248, '50']);
            c.tag(718, '3667.25', '#000');
            c.tag(928, '86.88', GRAY, '#222');
            c.tag(970, '70', BLUE);
            c.tag(1018, '51.65', YELLOW, '#222');
            c.tag(1073, '30', BLUE);
            c.tag(1127, '9.55', GRAY, '#222');
            c.tag(1229, '60.07', TEAL);
        }
    },
    es480: {
        name: 'ES 12-22', interval: '480 Minute', view: [70, 112, 1534, 1497], axis: 1439,
        draw: function (c) {
            var xs = [233, 331, 460, 588, 686, 815, 943, 1041, 1171, 1268, 1397];
            c.grid(xs, [158, 315, 472, 628, 783, 1342], 1420);
            [265, 298, 364, 396, 428, 493, 524, 556, 621, 654, 718, 750, 783, 848, 880, 911, 975, 1009, 1073, 1106, 1138, 1203, 1235, 1300, 1332, 1365].forEach(function (x) { c.line(x, 112, x, 1420, '#292929'); });
            c.shape('150,480 482,345 660,460 732,403 860,565', GREEN, 0.15);
            c.walk(168, 10.68, 3, '460,445,438,432,436,433,438,442,436,428,424,430,438,446,450,452,440,415,402,396,392,398,400,380,372,366,362,360,362,352,350,362,372,374,372,366,376,390,400,412,432,438,440,440,446,456,444,436,428,418,412,408,406,490,500,508,500,490,505,518,512,508,520,545,552,536,532,520,555,548,552,550,548,552,552,568,560,530,522,526,514,505,498,488,478,470,455,450,448,510,548,548,545,540,542,538,555,575,595,585,592,596,580,568,562,590,592,588,580,628,632,640,640,675,678,690,673,695');
            c.poly('150,480 482,345 660,460 732,403 860,565', GREEN, 2);
            c.poly('482,345 732,403', GRAY, 1, '3 2');
            c.poly('165,470 660,460 865,565 165,475', GRAY, 1, '3 2');
            c.label(206, 375, 'HOP: (4285.75)', 16, GREEN);
            c.label(175, 447, 'HOP: (4148.00)', 16, GREEN);
            c.label(206, 430, '1.414 AB=CD (4181.25)', 16, RED);
            c.label(176, 494, '1.618 (XA) (4062.25)', 16, RED);
            c.label(282, 533, 'T1: (3980.75)', 16, RED);
            c.label(312, 547, 'T1: (3968.75)', 16, RED);
            c.label(282, 583, 'T2: (3889.50)', 16, RED);
            c.label(314, 606, 'T2: (3849.75)', 16, RED);
            [[377, 206, GREEN], [424, 206, RED], [460, 176, GREEN], [488, 176, RED], [537, 282, RED], [541, 310, RED], [583, 282, RED], [603, 310, RED]].forEach(function (r) { c.h(r[0], 100, r[1] - 5, r[2], 2, '5 3'); });
            c.label(1090, 430, 'T2: (4183.25)', 16, GREEN);
            c.label(1090, 484, 'T1: (4083.25)', 16, GREEN);
            c.h(429, 869, 1085, GREEN, 2, '5 3');
            c.h(481, 869, 1085, GREEN, 2, '5 3');
            c.label(982, 549, '1.272 AB=CD (3959.25)', 16, GREEN);
            c.label(982, 609, 'HOP: (3839.00)', 16, RED);
            c.h(547, 869, 978, GREEN, 2, '5 3');
            c.h(554, 869, 978, GREEN, 2, '5 3');
            c.h(608, 869, 978, RED, 2, '5 3');
            c.h(461, 640, 690, GREEN, 3);
            c.text(580, 552, 'Deep Crab', 16, GREEN);
            c.text(366, 467, '0.886', 16, YELLOW);
            c.text(560, 374, '0.500', 16, YELLOW);
            c.text(470, 519, '1.618', 16, YELLOW);
            c.text(722, 514, '2.618', 16, YELLOW);
            c.text(469, 315, 'A', 16, YELLOW);
            c.text(652, 492, 'B', 16, YELLOW);
            c.text(716, 373, 'C', 16, YELLOW);
            c.text(857, 594, 'D', 16, YELLOW);
            c.sun(847, 555);
            [[222, 412], [395, 381], [502, 330], [740, 386], [1127, 487]].forEach(function (p) { c.arrow(p[0], p[1]); });
            [[287, 467], [674, 467], [792, 522], [814, 543], [869, 584], [988, 590], [1234, 608]].forEach(function (p) { c.arrow(p[0], p[1], true); });
            c.title(142, 'hpcPatternsIndicator (ES 12-22), hpcHSIArrowsIndicator (ES 12-22)', 79);
            c.text(79, 763, 'Harmonic Pattern Collection v20.12.16', 10, '#666');
            c.text(1423, 768, 'hpc patterns found: [9]', 9, '#606060', 'end');
            c.rsi(842, 940, 890);
            c.poly('168,862 178,842 190,826 201,831 211,828 222,834 233,831 244,879 254,868 265,866 276,838 287,874 298,879 309,903 319,897 331,907 341,846 352,833 372,823 383,851 394,854 405,843 415,822 426,831 437,826 448,829 458,825 491,825 501,873 513,873 522,885 534,885 544,869 556,885 568,921 587,941 599,968 612,974 621,977 632,961 642,967 653,966 663,952 674,927 696,901 707,873 717,875 728,871 739,981 750,986 762,962 772,963 783,948 794,955 805,967 815,942 825,944 848,973 859,967 869,938 880,941 891,914 902,938 911,940 922,930 935,930 945,924 957,935 967,934 978,945 988,914 1000,866 1009,864 1019,878 1031,851 1041,844 1062,825 1073,823 1084,807 1105,813 1117,912 1127,944 1138,943 1149,925 1160,922 1171,926 1181,921 1191,948 1203,955 1215,968 1224,932 1235,942 1246,932 1257,899 1268,897 1279,919 1289,922 1299,919 1310,906 1320,949 1331,952 1365,952 1375,974 1385,966 1396,974 1407,941 1418,959', YELLOW);
            c.level(842, [80, BLUE, 308, RED, 350, BLUE, 568, RED, 1050, BLUE, 1418]);
            c.level(940, [80, BLUE, 707, GREEN, 740, BLUE, 998, GREEN, 1127, BLUE, 1418]);
            c.dashes(805, 80, 258);
            c.dashes(820, 519, 1086);
            c.dashes(967, 80, 612);
            c.dashes(977, 692, 745);
            c.dashes(985, 885, 1422);
            c.title(824, 'hpcAmpRSIIndicator (ES 12-22)', 79);
            c.hsi(1042, 1056, 1104, 1153, 1164);
            c.poly('168,1100 178,1085 190,1056 201,1047 211,1041 222,1080 244,1148 255,1167 265,1171 276,1151 298,1143 320,1147 331,1152 352,1101 372,1053 383,1054 395,1063 405,1064 416,1056 437,1054 458,1045 480,1042 491,1035 502,1065 513,1080 524,1102 534,1122 545,1115 556,1113 577,1136 598,1170 610,1182 621,1187 632,1182 653,1178 664,1166 696,1102 707,1079 717,1062 728,1053 750,1117 762,1141 772,1151 794,1152 805,1157 825,1143 837,1149 847,1159 859,1166 869,1149 880,1137 891,1121 902,1121 922,1131 945,1129 967,1141 978,1152 988,1143 1009,1085 1031,1058 1041,1051 1062,1029 1073,1020 1084,1015 1095,1013 1106,1008 1117,1053 1138,1122 1149,1137 1160,1142 1182,1136 1203,1160 1215,1167 1225,1157 1247,1139 1257,1120 1268,1106 1289,1115 1310,1119 1320,1132 1343,1155 1366,1186 1375,1191 1397,1194 1407,1183 1418,1173', TEAL);
            c.title(1027, 'hpcHSIIndicator (ES 12-22)', 79);
            c.rsi(1239, 1378, 1308);
            c.poly('168,1250 178,1235 190,1229 201,1231 235,1229 244,1264 254,1259 265,1258 276,1240 287,1270 298,1270 309,1295 319,1292 331,1299 341,1255 352,1243 372,1234 383,1255 395,1254 405,1245 416,1232 437,1235 448,1234 458,1229 470,1229 480,1222 491,1222 501,1262 513,1260 523,1272 534,1272 545,1260 556,1275 567,1307 586,1329 609,1365 622,1370 632,1361 643,1367 653,1371 664,1370 675,1349 696,1328 707,1304 717,1305 728,1302 739,1388 750,1391 762,1377 772,1378 783,1367 805,1386 815,1371 825,1374 848,1395 859,1395 869,1368 880,1371 891,1352 902,1370 911,1371 933,1364 945,1365 967,1377 978,1382 1000,1316 1009,1310 1019,1316 1031,1294 1041,1288 1062,1266 1073,1262 1084,1245 1105,1241 1117,1315 1127,1352 1138,1350 1149,1337 1160,1336 1171,1339 1182,1334 1191,1357 1203,1368 1215,1382 1225,1345 1236,1354 1246,1347 1257,1329 1268,1328 1279,1349 1289,1349 1300,1344 1310,1335 1320,1369 1365,1375 1375,1394 1386,1392 1396,1399 1407,1377 1418,1388', YELLOW);
            c.level(1239, [80, BLUE, 578, RED, 1418]);
            c.level(1378, [80, GREEN, 740, BLUE, 1418]);
            c.dashes(1217, 80, 1422);
            c.dashes(1395, 80, 855);
            c.title(1237, 'hpcRSIBammIndicator (ES 12-22)', 79);
            c.title(1384, '© 2022 NinjaTrader, LLC', 79);
            [793, 997, 1206, 1420].forEach(c.split, c);
            c.dates(1420, 1467, [233, 'Aug 5', 331, 'Aug 10', 460, 'Aug 16', 588, 'Aug 22', 686, 'Aug 25', 815, 'Aug 31', 943, 'Sep 6', 1041, 'Sep 9', 1171, 'Sep 15', 1268, 'Sep 20', 1397, 'Sep 26']);
            c.vaxis(1420);
            c.scale(211, 52.1, 4600, -100, 11, 2);
            c.ticks([158, '', 783, '', 891, '50', 1042, '100', 1104, '50', 1272, '60', 1342, '40']);
            c.tag(697, '3667.25', '#000');
            c.tag(842, '70', BLUE);
            c.tag(952, '23', YELLOW, '#222');
            c.tag(940, '30', BLUE);
            c.tag(983, '12.84', GRAY, '#222');
            c.tag(1173, '-6.14', TEAL);
            c.tag(1240, '70', RED);
            c.tag(1219, '75.78', GRAY, '#222');
            c.tag(1390, '27', YELLOW, '#222');
            c.tag(1377, '30', BLUE);
        }
    },
    gc: {
        name: 'GC 12-22', interval: 'Daily', view: [23, 72, 1537, 1399], axis: 1454,
        draw: function (c) {
            c.grid([145, 432, 748, 1048, 1335], [183, 313, 441, 571, 701, 889, 992, 1188], 1346);
            c.shape('23,478 187,530 23,506', GREEN, 0.2);
            c.shape('338,574 529,465 640,536 680,503 994,662', '#fff', 0.03);
            c.walk(51, 13.68, 4, '436,441,446,440,451,453,463,466,459,500,520,519,520,526,534,524,550,555,545,548,550,546,532,538,540,536,508,500,497,494,500,478,488,480,478,474,474,468,488,498,504,508,516,530,520,514,510,526,528,540,550,563,552,544,556,546,547,545,538,556,562,590,582,590,588,590,586,610,633');
            c.poly('23,478 187,530', GREEN, 2);
            c.poly('23,506 187,530 23,531', GRAY, 1, '3 2');
            c.label(467, 339, 'T2: (1970.6)', 9, GREEN);
            c.label(467, 411, 'T1: (1885.9)', 9, GREEN);
            c.label(329, 499, '1.272 AB=CD (1784.7)', 9, GREEN);
            c.label(329, 522, '0.886 (XA) (1756.8)', 9, GREEN);
            c.label(331, 609, 'HOP: (1655.7)', 9, RED);
            c.h(339, 188, 462, GREEN, 2, '5 3');
            c.h(411, 188, 462, GREEN, 2, '5 3');
            c.h(499, 188, 324, GREEN, 2, '5 3');
            c.h(522, 188, 324, GREEN, 2, '5 3');
            c.h(609, 188, 324, RED, 2, '5 3');
            c.poly('338,574 529,465 640,536 680,503 994,662', DIM, 2);
            c.poly('529,465 680,503', GRAY, 1, '3 2');
            c.poly('338,574 640,536 994,662 338,574', GRAY, 1, '3 2');
            c.text(329, 596, 'X', 16, GRAY);
            c.text(517, 445, 'A', 16, GRAY);
            c.text(628, 561, 'B', 16, GRAY);
            c.text(667, 483, 'C', 16, GRAY);
            c.text(560, 484, '0.500', 16, GRAY);
            c.text(445, 556, '0.618', 16, GRAY);
            c.text(773, 600, '3.618', 16, GRAY);
            c.text(602, 600, 'Crab', 16, DIM);
            c.text(623, 619, '1.618', 16, GRAY);
            c.text(176, 550, 'D', 16, YELLOW);
            c.label(1135, 623, '3.618 (BC) (1639.1)', 9, GRAY);
            c.label(1135, 643, '1.618 (XA) (1617.3)', 9, GRAY);
            c.h(623, 994, 1130, GRAY, 1, '4 2');
            c.h(643, 994, 1130, GRAY, 1, '4 2');
            c.sun(187, 530);
            c.arrow(145, 497, true);
            c.arrow(487, 462);
            c.arrow(639, 549, true);
            c.arrow(761, 577, true);
            c.title(93, 'hpcPatternsIndicator (GC 12-22), hpcHSIArrowsIndicator (GC 12-22)');
            c.footer(719, 8, 723);
            c.rsi(756, 862, 810);
            c.poly('52,818 64,828 78,828 92,833 105,836 120,842 133,854 147,861 160,846 174,894 188,914 202,904 215,893 229,898 242,899 256,874 270,896 284,896 298,878 311,874 324,883 338,850 352,825 364,836 380,836 394,832 407,778 420,764 433,760 449,760 461,786 475,753 488,780 502,764 516,761 529,761 543,776 557,765 571,798 598,833 625,849 640,866 653,839 666,837 680,818 694,848 707,846 720,863 735,870 749,888 762,856 776,853 789,863 803,830 816,842 830,829 843,808 858,836 871,842 884,882 898,868 912,870 926,873 939,849 953,849 966,876 981,898', YELLOW);
            c.level(757, [52, BLUE, 981]);
            c.level(862, [52, BLUE, 407, GREEN, 640, BLUE, 981]);
            c.dashes(922, 47, 355);
            c.dashes(914, 361, 958);
            c.title(761, 'hpcAmpRSIIndicator (GC 12-22)');
            c.hsi(957, 976, 1046, 1117, 1137);
            c.poly('52,1049 78,1069 105,1096 134,1125 147,1066 160,1017 174,1007 188,1016 215,1041 229,1060 242,1070 256,1065 284,1094 311,1093 324,1099 338,1081 352,1054 364,1046 380,1042 394,1035 420,988 449,946 461,965 475,966 488,986 502,993 516,991 529,986 543,995 557,991 571,1015 598,1077 625,1124 640,1087 680,991 694,1005 707,1025 735,1087 749,1117 762,1113 776,1103 789,1105 803,1080 816,1073 830,1059 843,1036 858,1045 871,1058 885,1089 898,1064 912,1043 939,1009 953,1000 966,1023 981,1054', TEAL);
            c.title(956, 'hpcHSIIndicator (GC 12-22)');
            c.rsi(1150, 1304, 1227);
            c.poly('52,1242 64,1250 78,1251 120,1266 147,1283 160,1271 174,1306 188,1325 202,1321 215,1317 229,1324 242,1327 256,1309 270,1327 284,1327 298,1316 311,1314 324,1322 338,1300 352,1274 364,1282 380,1283 394,1279 407,1228 420,1215 433,1208 449,1205 461,1223 475,1190 488,1211 502,1196 516,1189 529,1188 543,1198 557,1190 571,1215 598,1241 625,1257 640,1273 653,1257 666,1252 680,1239 694,1264 707,1264 749,1300 762,1279 776,1278 789,1287 803,1259 816,1270 830,1257 843,1238 858,1265 871,1272 885,1299 898,1291 926,1297 939,1281 953,1281 966,1297 981,1320', YELLOW);
            c.level(1150, [52, BLUE, 981]);
            c.level(1304, [52, BLUE, 420, GREEN, 981]);
            c.dashes(1328, 361, 985);
            c.title(1160, 'hpcRSIBammIndicator (GC 12-22)');
            c.title(1320, '© 2022 NinjaTrader, LLC');
            [740, 934, 1138, 1346].forEach(c.split, c);
            c.dates(1346, 1377, [145, 'Jul', 432, 'Aug', 748, 'Sep', 1048, 'Oct', 1335, 'Nov']);
            c.vaxis(1346);
            c.ticks([97, '']);
            c.scale(140, 43.15, 2200, -50, 14, 1);
            c.ticks([784, '60', 838, '40', 957, '100', 993, '80', 1029, '60', 1066, '40', 1102, '20', 1188, '60', 1227, '50', 1265, '40']);
            c.tag(632, '1629.3', '#000');
            c.tag(757, '70', BLUE);
            c.tag(898, '17.51', YELLOW, '#222');
            c.tag(862, '30', BLUE);
            c.tag(881, '23.87', GRAY, '#222');
            c.tag(1055, '46.05', TEAL);
            c.tag(1151, '70', BLUE);
            c.tag(1304, '30', GREEN);
            c.tag(1328, '23.8', GRAY, '#222');
            c.back();
        }
    },
    nqWeekly: {
        name: 'NQ 12-22', interval: 'Weekly', view: [18, 59, 3119, 2882], axis: 3045,
        draw: function (c) {
            var xs = [85, 192, 325, 433, 539, 673, 780, 887, 1020, 1128, 1233, 1366, 1473, 1608, 1715, 1822, 1929, 2063, 2170, 2276, 2409, 2516, 2649, 2757, 2864, 2997];
            var low = function (y) { return 1485.5 + 0.94737 * y; };
            c.grid(xs, [300, 662, 1026, 1390], low(1410));
            c.shape('433,1200 1447,92 1876,1015', '#fff', 0.03);
            c.shape('1876,1015 1929,452 2390,1504 2226,1504', '#fff', 0.03);
            c.shape('2436,829 2596,829 2596,1477 2436,1477', '#fff', 0.03);
            c.shape('2436,982 2596,982 2596,1153 2436,1153', '#1e60ff', 0.09);
            c.shape('2436,1153 2596,1153 2596,1403 2436,1403', TEAL, 0.09);
            c.candles(59, 26.7, 10, 'g1187 1276 1176 1298,g1121 1179 1120 1230,r1123 1161 1087 1198,g1076 1148 1058 1157,r1066 1078 1060 1138,g1035 1086 1027 1090,g983 1035 978 1131,r985 1055 981 1070,g919 1061 906 1075,r917 1028 862 1049,g863 1043 854 1075,g812 857 811 882,r808 868 790 894,r865 1028 856 1089,r1018 1088 928 1200,g1024 1076 980 1182,r1022 1043 937 1083,g1014 1053 966 1102,g929 1012 926 1060,g806 923 803 933,g756 808 751 828,r766 781 753 838,r783 800 749 808,r793 835 778 914,r832 913 825 1026,g907 913 869 1017,g839 913 821 919,g820 837 817 894,g764 818 762 839,g752 762 712 803,g680 756 660 771,g589 676 586 681,g564 591 549 630,r562 599 522 601,g496 597 492 654,r496 529 488 576,g496 525 479 556,g488 498 484 534,r490 498 488 590,g416 498 414 498,g362 414 351 418,r360 412 350 413,r410 438 385 449,g438 449 433 562,r438 575 421 628,g562 568 518 670,g484 562 483 616,g434 482 400 507,g313 438 307 445,g189 302 166 331,r203 228 180 301,g135 224 124 256,r129 263 92 278,r263 343 165 388,g195 343 169 381,r197 325 165 358,g203 321 190 397,g197 201 116 204,r189 376 138 394,g373 374 274 481,r368 655 360 659,g653 659 605 830,g593 649 454 675,r593 700 501 715,r698 760 598 780,g715 771 712 994,r783 797 664 836,r816 929 788 976,g657 919 653 1015,g575 659 556 714,g548 575 452 598,r552 678 468 682,r674 783 666 788,r783 913 687 928,r919 1035 858 1048,r1026 1074 867 1116,r1095 1148 1087 1317,r1142 1280 1100 1366,g1078 1274 1069 1345,r1070 1109 1013 1135,r1109 1282 1046 1286,r1295 1420 1295 1475,g1216 1390 1216 1414,r1216 1344 1187 1406,g1212 1344 1200 1398,r1214 1247 1214 1376,g1148 1239 1081 1285,g1014 1142 1007 1234,g952 1012 916 1054,g868 952 867 1018,r870 942 829 953,r952 1099 952 1116,r1132 1224 1092 1245,g1107 1222 1102 1269,r1099 1284 1030 1322,r1288 1418 1236 1457,r1423 1433 1380 1448');
            c.poly('433,1200 1447,92 1876,1015 1929,452 2390,1504', DIM, 2);
            c.poly('1447,92 1929,452', DIM, 1, '3 2');
            c.poly('433,1200 1876,1015 2226,1504', DIM, 1, '3 2');
            c.poly('433,1200 1182,1504', DIM, 1, '3 2');
            c.poly('2436,1477 2596,829', DIM, 1);
            c.full(1094, '#d4dcd4', 1);
            c.text(1154, 1109, '0.886', 14, GRAY, 'middle');
            c.text(1688, 272, '0.618', 14, GRAY, 'middle');
            c.text(433, 1223, 'X', 14, GRAY, 'middle');
            c.text(1447, 72, 'A', 14, GRAY, 'middle');
            c.text(1929, 431, 'C', 14, DIM, 'middle');
            c.text(1876, 1037, 'B', 14, GRAY, 'middle');
            c.text(1876, 1080, 'Deep Crab', 14, DIM, 'middle');
            var a = '#a9a9a9';
            c.fib(2435, 2596, [[829, '0.00% (13822.44)', a], [982, '23.60% (13189.37)', '#1e90ff'], [1077, '38.20% (12797.72)', '#6495ed'], [1153, '50.00% (12481.19)', '#4682b4'], [1230, '61.80% (12164.65)', TEAL], [1339, '78.60% (11713.99)', '#2e8b57'], [1403, '88.60% (11445.74)', a], [1477, '100.00% (11139.93)', a]]);
            c.title(83, 'hpcPatternsIndicator (NQ 12-22), hpcHSIArrowsIndicator (NQ 12-22)', 25);
            c.text(25, 1481, 'Harmonic Pattern Collection v20.12.16', 10, '#666');
            c.text(3034, 1486, 'hpc patterns found: [1]', 9, '#606060', 'end');

            c.remap = low;
            [108, 450, 602, 761, 1009, 1129, 1249].forEach(function (y) { c.full(y, '#303030'); });
            c.rsi(165, 393, 278);
            c.series(60, 26.7, '183,164,191,164,170,158,144,201,146,219,159,148,187,274,300,269,278,266,226,176,164,184,202,227,278,274,235,229,200,198,163,126,124,160,120,156,146,150,164,126,109,164,194,200,311,300,242,213,151,104,143,114,210,263,196,269,217,217,307,303,402,398,359,392,404,374,400,433,297,265,257,309,345,381,409,413,427,453,350,356,402,429,340,370,320,326,289,246,228,207,238,297,335,290,342,374,374', YELLOW);
            c.level(165, [60, BLUE, 1608, RED, 2623]);
            c.level(393, [60, BLUE, 2623]);
            c.dashes(46, 50, 1484);
            c.dashes(104, 1491, 2633);
            c.title(46, 'hpcAmpRSIIndicator (NQ 12-22)', 25);
            c.hsi(0, 503, 710, 914, 0);
            c.h(710, 60, 2623, TEAL, 2);
            c.title(503, 'hpcHSIIndicator (NQ 12-22)', 25);
            c.rsi(1051, 1366, 1208);
            c.series(60, 26.7, '1086,1069,1090,1067,1069,1056,1043,1087,1050,1108,1065,1052,1082,1155,1178,1157,1165,1157,1128,1091,1078,1090,1102,1119,1160,1159,1132,1124,1104,1100,1073,1043,1037,1062,1030,1055,1045,1043,1048,1023,1008,1050,1069,1071,1169,1165,1126,1104,1058,1023,1048,1026,1104,1148,1101,1160,1121,1121,1195,1193,1285,1285,1259,1292,1306,1287,1311,1343,1239,1213,1204,1244,1273,1305,1330,1337,1352,1379,1300,1306,1342,1364,1296,1320,1278,1287,1254,1217,1199,1178,1199,1244,1271,1238,1279,1304,1308', YELLOW);
            c.level(1051, [60, BLUE, 1662, RED, 2623]);
            c.level(1367, [60, BLUE, 2623]);
            c.dashes(965, 50, 1484);
            c.dashes(1023, 1491, 2633);
            c.title(965, 'hpcRSIBammIndicator (NQ 12-22)', 25);
            c.title(1379, '© 2022 NinjaTrader, LLC', 25);
            [21, 478, 940, 1410].forEach(c.split, c);
            var names = 'Dec 2021 Feb Mar Apr May Jun Jul Aug Sep Oct Nov Dec 2022 Feb Mar Apr May Jun Jul Aug Sep Oct Nov Dec 2023'.split(' ');
            var list = [];
            names.forEach(function (n, i) { list.push(xs[i], n); });
            c.dates(1410, 1449, list);
            c.vaxis(1410);
            c.ticks([51, '90', 221, '60', 278, '50', 335, '40', 451, '20']);
            c.scale(496, 53.1, 90, -10, 9, 0);
            c.ticks([971, '80', 1009, '75', 1090, '65', 1130, '60', 1168, '55', 1208, '50', 1249, '45', 1288, '40', 1328, '35']);
            c.tag(104, '80.67', GRAY, '#222');
            c.tag(164, '70', RED);
            c.tag(374, '33.37', YELLOW, '#222');
            c.tag(394, '30', BLUE);
            c.tag(709, '50', TEAL);
            c.tag(1052, '70', RED);
            c.tag(1023, '73.43', GRAY, '#222');
            c.tag(1308, '37.5', YELLOW, '#222');
            c.tag(1366, '30', BLUE);
            c.remap = null;
            c.scale(181, 120.9, 16500, -500, 11, 2);
            c.tag(1094, '12718.00', '#3f3f46');
            c.tag(1433, '11315.50', '#000');
            c.back();
        }
    }
};

var tools = [['bars', 'Chart style'], ['pencil', 'Drawing tools'], ['zoomin', 'Zoom in'], ['zoomout', 'Zoom out'], ['cross', 'Cross hair'], ['data', 'Data box'], ['trader', 'Chart trader'], ['chart', 'Data series'], ['poly', 'Indicators'], ['strategy', 'Strategies'], ['list', 'Properties']];

function buildWindow(id) {
    var cfg = charts[id], win = document.getElementById(id);
    win.appendChild(document.getElementById('chartWindow').content.cloneNode(true));
    win.querySelector('.instrument').add(new Option(cfg.name));
    win.querySelector('.interval').add(new Option(cfg.interval));
    win.querySelector('.tab').textContent = cfg.name;
    if (cfg.plain) win.classList.add('plain');
    win.querySelector('.tools').innerHTML = tools.map(function (t) {
        return '<button aria-label="' + t[1] + '"' + (t[0] === 'zoomout' ? ' class="off"' : '') + '><svg><use href="#i-' + t[0] + '"/></svg></button>';
    }).join('');
}

function drawAll() {
    for (var id in charts) {
        var svg = document.querySelector('#' + id + ' .plot svg');
        charts[id].draw(new Surface(svg, charts[id].view, charts[id].axis));
    }
}

Object.keys(charts).forEach(buildWindow);
drawAll();
window.addEventListener('resize', drawAll);
```
